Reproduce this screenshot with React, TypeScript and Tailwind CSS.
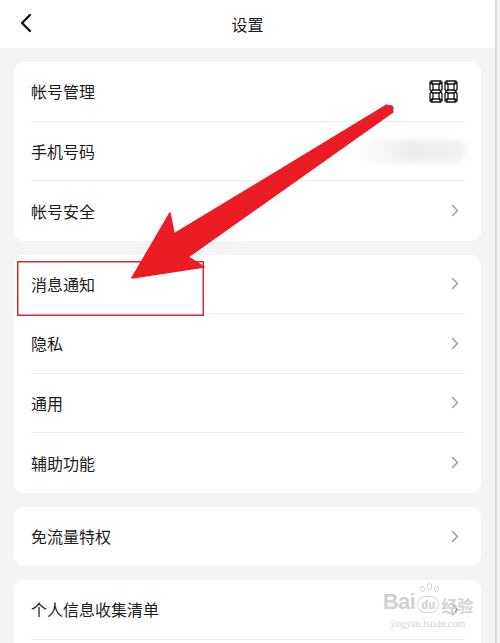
import React from 'react'

const font = { fontFamily: '"Noto Sans CJK SC", "Noto Sans", sans-serif' }

function Chevron() {
  return (
    <svg width="8" height="13" viewBox="0 0 8 13" fill="none">
      <path d="M1.5 1.5 L6.5 6.5 L1.5 11.5" stroke="#a0a0a0" strokeWidth="1.6" strokeLinecap="round" strokeLinejoin="round" />
    </svg>
  )
}

// seven-segment style "88" glyph drawn as outlined segments
function SegDigit({ x }: { x: number }) {
  const segs = [
    `M${x + 2} 1 h10 l-2 3 h-6 z`,
    `M${x + 2} 22 h10 l-2 -3 h-6 z`,
    `M${x + 3.5} 10 h7 l1.5 1.5 l-1.5 1.5 h-7 l-1.5 -1.5 z`,
    `M${x + 1} 2 l3 3 v4.5 l-1.5 1.5 l-1.5 -1.5 z`,
    `M${x + 13} 2 l-3 3 v4.5 l1.5 1.5 l1.5 -1.5 z`,
    `M${x + 1} 21 l3 -3 v-4.5 l-1.5 -1.5 l-1.5 1.5 z`,
    `M${x + 13} 21 l-3 -3 v-4.5 l1.5 -1.5 l1.5 1.5 z`,
  ]
  return (
    <>
      {segs.map((d, i) => (
        <path key={i} d={d} fill="#fff" stroke="#111" strokeWidth="1.3" strokeLinejoin="round" />
      ))}
    </>
  )
}

function Row({ label, last, right }: { label: string; last?: boolean; right?: React.ReactNode }) {
  return (
    <div className="h-[59.5px] pl-[17px] pr-[16px]">
      <div
        className={
          'h-full flex items-center justify-between ' + (last ? '' : 'border-b border-[#ececec]')
        }
      >
        <span className="text-[16px] text-[#1c1c1c]">{label}</span>
        <div className="pr-[6px] flex items-center">{right ?? <Chevron />}</div>
      </div>
    </div>
  )
}

function Card({ children }: { children: React.ReactNode }) {
  return <div className="bg-white rounded-[10px] mt-[14px]">{children}</div>
}

export default function App() {
  return (
    <div className="relative w-[500px] h-[643px] overflow-hidden bg-[#f4f4f4]" style={font}>
      <div className="w-[497px] h-full border-r-[2px] border-[#dadada]">
        {/* header */}
        <div className="h-[48px] bg-white relative flex items-center justify-center">
          <svg className="absolute left-[19px] top-[13px]" width="14" height="20" viewBox="0 0 14 20" fill="none">
            <path d="M11 2 L3 10 L11 18" stroke="#111" strokeWidth="2.4" strokeLinecap="round" strokeLinejoin="round" />
          </svg>
          <span className="text-[16px] text-[#1c1c1c]">设置</span>
        </div>

        <div className="pl-[14px] pr-[14px]">
          <Card>
            <Row
              label="帐号管理"
              right={
                <svg width="31" height="23" viewBox="0 0 31 23">
                  <SegDigit x={1} />
                  <SegDigit x={16} />
                </svg>
              }
            />
            <Row
              label="手机号码"
              right={
                <div className="w-[112px] h-[24px] mr-[-8px] rounded-full bg-gradient-to-r from-[#ffffff] via-[#ededed] to-[#f2f2f2] blur-[3px]" />
              }
            />
            <Row label="帐号安全" last />
          </Card>

          <Card>
            <Row label="消息通知" />
            <Row label="隐私" />
            <Row label="通用" />
            <Row label="辅助功能" last />
          </Card>

          <Card>
            <Row label="免流量特权" last />
          </Card>

          <Card>
            <Row label="个人信息收集清单" />
            <div className="h-[40px]" />
          </Card>
        </div>
      </div>

      {/* annotation: box + arrow */}
      <svg className="absolute left-0 top-0" width="500" height="643" viewBox="0 0 500 643">
        <rect x="17.75" y="261.75" width="185.5" height="53.5" fill="none" stroke="#d42b2b" strokeWidth="1.5" />
        <path
          d="M387 105 L174 234 L170 213 L132 278 L204 267 L188 257 L393 112 Z"
          fill="#ec1c24"
          stroke="#ec1c24"
          strokeWidth="1.5"
          strokeLinejoin="round"
        />
        <circle cx="390" cy="108.5" r="3.6" fill="#ec1c24" />
      </svg>

      {/* watermark */}
      <div className="absolute left-[381px] top-[591px] w-[94px] flex flex-col items-center text-[#d2d2d2]">
        <div className="flex items-end leading-none">
          <span className="text-[22px] font-bold tracking-tight" style={{ fontFamily: '"Liberation Sans", sans-serif' }}>
            Bai
          </span>
          <span className="relative ml-[2px] w-[22px] h-[17px] rounded-full border-[1.5px] border-[#d2d2d2] text-[11px] flex items-center justify-center font-bold">
            du
            <span className="absolute top-[-11px] left-[2px] flex gap-[2px]">
              <span className="w-[5px] h-[6px] rounded-full border border-[#d2d2d2]" />
              <span className="w-[5px] h-[7px] rounded-full border border-[#d2d2d2] mt-[-3px]" />
              <span className="w-[5px] h-[6px] rounded-full border border-[#d2d2d2]" />
            </span>
          </span>
          <span className="ml-[2px] text-[16px] font-bold">经验</span>
        </div>
        <span className="text-[10px] mt-[3px]" style={{ fontFamily: '"Liberation Serif", serif' }}>
          jingyan.baidu.com
        </span>
      </div>
    </div>
  )
}
